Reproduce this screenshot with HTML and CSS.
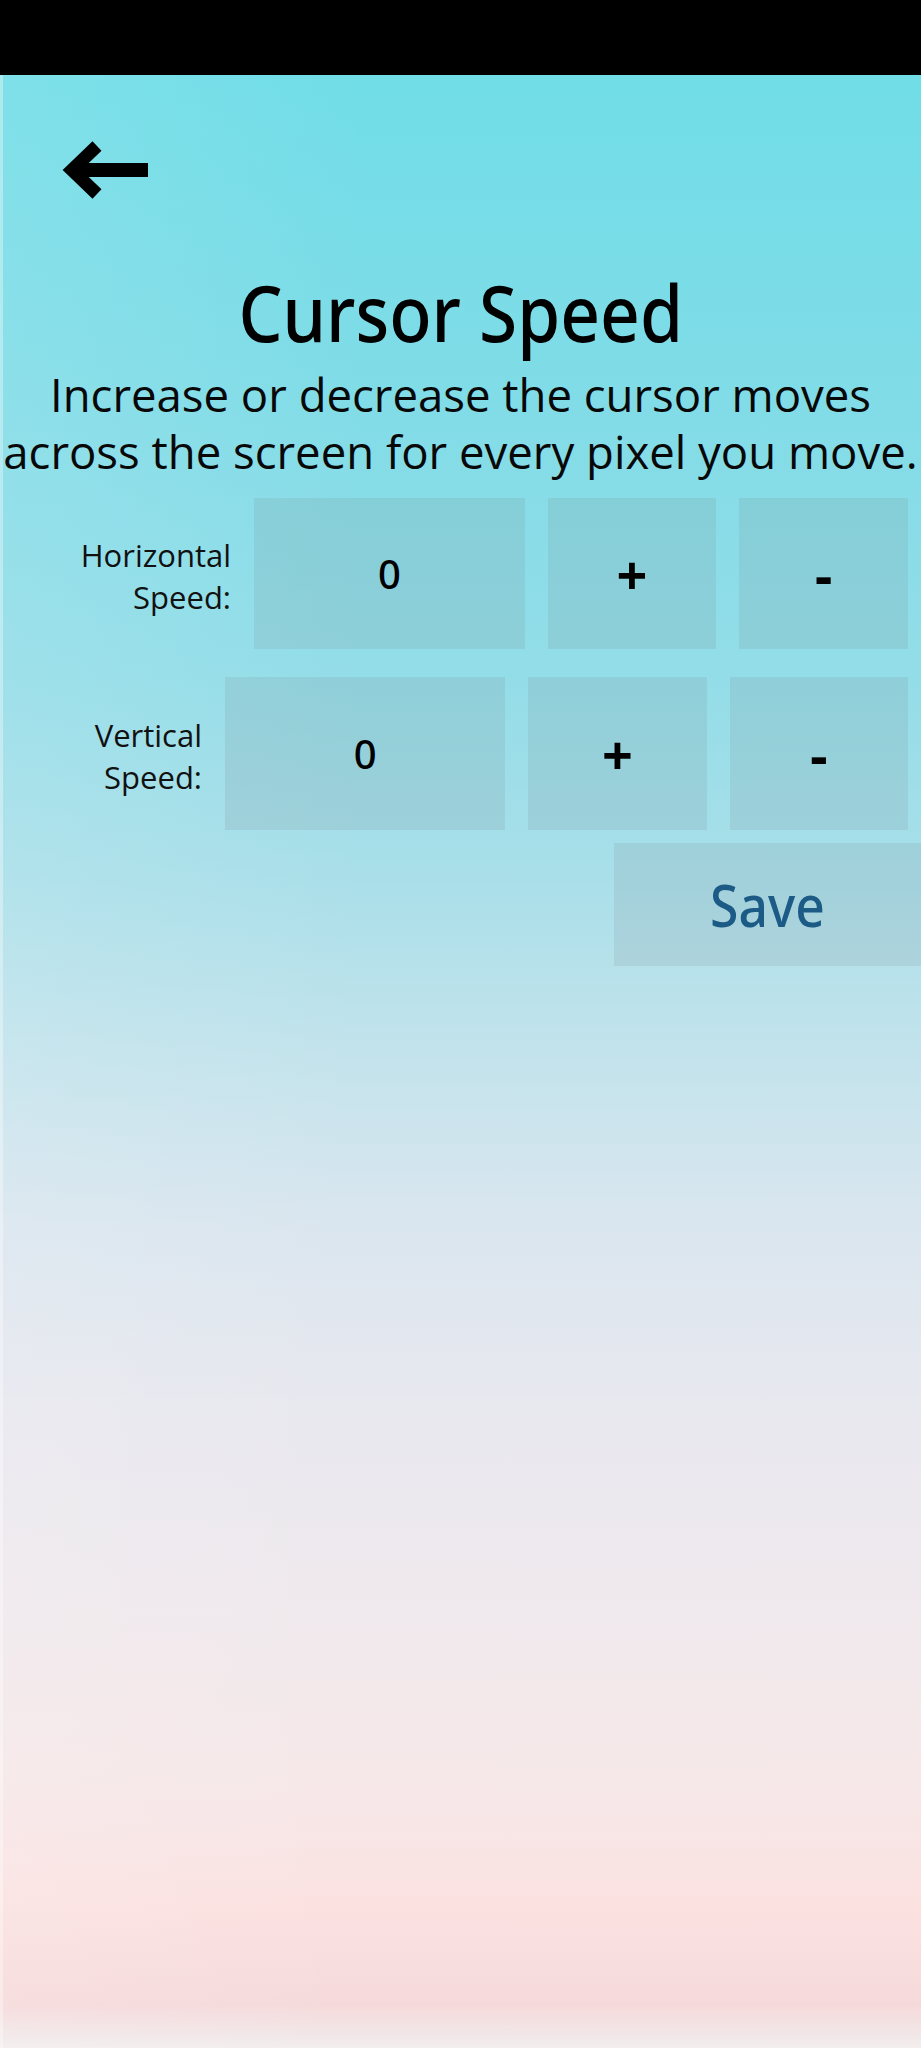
FILE: index.html
```html
<!DOCTYPE html>
<html lang="en">
<head>
<meta charset="utf-8">
<title>Cursor Speed</title>
<link rel="stylesheet" href="styles.css">
</head>
<body>
<div class="status"></div>
<main class="app">
  <header class="top">
    <button class="back" aria-label="Back">
      <svg width="92" height="68" viewBox="0 0 92 68">
        <path d="M14 34 H88" stroke="#000" stroke-width="14" fill="none"/>
        <path d="M37 10 L12 34 L37 58" stroke="#000" stroke-width="13" fill="none" stroke-linejoin="miter"/>
      </svg>
    </button>
  </header>
  <h1 class="title"><span class="narrow">Cursor Speed</span></h1>
  <p class="desc">Increase or decrease the cursor moves<br>across the screen for every pixel you move.</p>

  <div class="row row-h">
    <div class="label label-h">Horizontal<br>Speed:</div>
    <div class="box value">0</div>
    <button class="box step">+</button>
    <button class="box step">-</button>
  </div>

  <div class="row row-v">
    <div class="label label-v">Vertical<br>Speed:</div>
    <div class="box value">0</div>
    <button class="box step">+</button>
    <button class="box step">-</button>
  </div>

  <div class="save-row">
    <button class="save"><span class="narrow">Save</span></button>
  </div>
</main>
</body>
</html>
```

FILE: styles.css
```css
html, body {
  margin: 0;
  padding: 0;
}
body {
  width: 921px;
  height: 2048px;
  overflow: hidden;
  background: #000;
  font-family: "Open Sans", "Noto Sans", sans-serif;
  color: #000;
}
.status {
  height: 75px;
  background: #000;
}
.app {
  height: 1973px;
  box-sizing: border-box;
  background:
    linear-gradient(90deg, rgba(255,255,255,0.10) 0%, rgba(255,255,255,0) 40%, rgba(255,255,255,0) 100%),
    linear-gradient(180deg,
      #70dde7 0px,
      #7fdce7 300px,
      #93dde8 600px,
      #a9dfe9 800px,
      #c3e3ec 980px,
      #dae6ef 1150px,
      #e8e8ef 1330px,
      #efe9ed 1520px,
      #f6e8e9 1700px,
      #fbe2e1 1830px,
      #f6dadb 1930px,
      #f1e9ea 1965px,
      #f4eeee 1973px);
  box-shadow: inset 3px 0 0 rgba(255,255,255,0.35);
  display: flex;
  flex-direction: column;
}
.top {
  height: 187px;
  box-sizing: border-box;
  padding: 61px 0 0 60px;
}
.back {
  display: block;
  padding: 0;
  margin: 0;
  border: 0;
  background: none;
}
.back svg {
  display: block;
}
.narrow {
  display: inline-block;
  transform: scaleX(0.89);
}
.title {
  margin: 0;
  height: 100px;
  font-family: "Noto Sans", "Open Sans", sans-serif;
  font-weight: 500;
  font-size: 78px;
  line-height: 100px;
  text-align: center;
  color: #000;
}
.desc {
  margin: 4px 0 0;
  font-size: 45.5px;
  line-height: 57px;
  text-align: center;
  white-space: nowrap;
  color: #080808;
}
.row {
  display: flex;
  align-items: center;
  gap: 23px;
  padding-right: 13px;
}
.row-h {
  margin-top: 18px;
  height: 151px;
  padding-left: 75px;
}
.row-v {
  margin-top: 28px;
  height: 153px;
  padding-left: 88px;
}
.label {
  flex: none;
  text-align: right;
  font-size: 31px;
  line-height: 42px;
  color: #111;
  padding-top: 5px;
  white-space: nowrap;
}
.label-h { width: 156px; }
.label-v { width: 114px; }
.box {
  align-self: stretch;
  display: flex;
  align-items: center;
  justify-content: center;
  border: 0;
  margin: 0;
  padding: 0;
  background: rgba(120, 128, 135, 0.15);
  font-family: "Noto Sans", "Open Sans", sans-serif;
  font-weight: 500;
  font-size: 40px;
  color: #000;
}
.value {
  flex: 1 1 102px;
}
.step {
  flex: 1 1 0;
  font-weight: 700;
  font-size: 54px;
}
.save-row {
  margin-top: 13px;
  display: flex;
  justify-content: flex-end;
}
.save {
  width: 307px;
  height: 123px;
  border: 0;
  margin: 0;
  padding: 0;
  background: rgba(120, 128, 135, 0.14);
  font-family: "Noto Sans", "Open Sans", sans-serif;
  font-weight: 500;
  font-size: 58px;
  color: #1b5b86;
}
```
